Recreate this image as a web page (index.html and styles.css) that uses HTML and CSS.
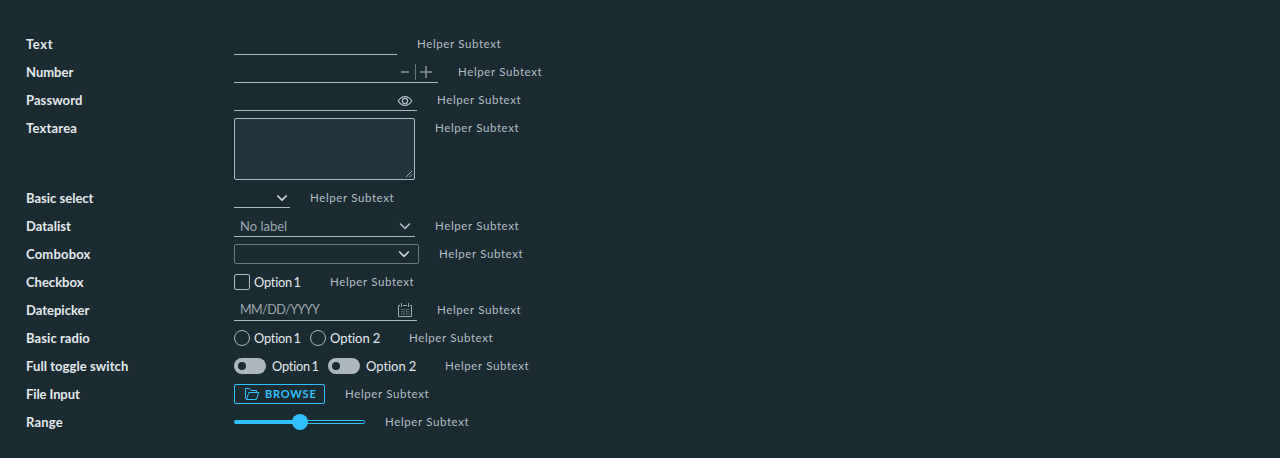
FILE: index.html
```html
<!DOCTYPE html>
<html lang="en">
<head>
<meta charset="utf-8">
<title>Form controls</title>
<link rel="stylesheet" href="styles.css">
</head>
<body>
<form class="form">
  <div class="row"><label class="label spaced-wide">Text</label><div class="control line text"></div><span class="helper">Helper Subtext</span></div>
  <div class="row"><label class="label">Number</label><div class="control line number">
    <svg width="42" height="20" viewBox="0 0 42 20" fill="none"><path d="M5 10H13" stroke="#84939a" stroke-width="1.6"/><path d="M19.5 2V18" stroke="#65747b"/><path d="M24 10H36M30 4V16" stroke="#84939a" stroke-width="1.6"/></svg>
  </div><span class="helper">Helper Subtext</span></div>
  <div class="row"><label class="label spaced">Password</label><div class="control line password">
    <svg width="16" height="16" viewBox="0 0 16 16" fill="none" stroke="#adbbc4" stroke-width="1.2"><path d="M1.2 8C3 5 5.3 3.6 8 3.6S13 5 14.8 8C13 11 10.7 12.4 8 12.4S3 11 1.2 8Z"/><circle cx="8" cy="8" r="2.6"/></svg>
  </div><span class="helper">Helper Subtext</span></div>
  <div class="row tall"><label class="label spaced-more">Textarea</label><div class="control area">
    <svg width="8" height="8" viewBox="0 0 8 8" fill="none" stroke="#adbbc4" stroke-width=".9"><path d="M1 7L7 1M4.5 7L7 4.5"/></svg>
  </div><span class="helper">Helper Subtext</span></div>
  <div class="row"><label class="label">Basic select</label><div class="control line select">
    <svg class="caret" width="12" height="8" viewBox="0 0 12 8"><path d="M1.3 1.5L6 6.2L10.7 1.5"/></svg>
  </div><span class="helper">Helper Subtext</span></div>
  <div class="row"><label class="label">Datalist</label><div class="control line datalist"><span class="placeholder">No label</span>
    <svg class="caret muted" width="12" height="8" viewBox="0 0 12 8"><path d="M1 1.5L6 6.4L11 1.5"/></svg>
  </div><span class="helper">Helper Subtext</span></div>
  <div class="row"><label class="label spaced-more">Combobox</label><div class="control combobox">
    <svg class="caret" width="12" height="8" viewBox="0 0 12 8"><path d="M1.1 1.5L6 6.4L10.9 1.5"/></svg>
  </div><span class="helper">Helper Subtext</span></div>
  <div class="row"><label class="label">Checkbox</label><div class="control check"><span class="box"></span><span class="option one">Option 1</span></div><span class="helper">Helper Subtext</span></div>
  <div class="row"><label class="label">Datepicker</label><div class="control line date"><span class="placeholder mask">MM/DD/YYYY</span>
    <svg width="16" height="16" viewBox="0 0 16 16" fill="none" stroke="#9dabb3"><path d="M3 3.5H1.5V14.5H14.5V3.5H13M6 3.5H10M4.5 1V5M11.5 1V5"/><path d="M4 7.5H12.5M4 9.8H12.5M4 12H12.5" stroke="#7f8e96" stroke-dasharray="1.5 1"/></svg>
  </div><span class="helper">Helper Subtext</span></div>
  <div class="row"><label class="label spaced">Basic radio</label><div class="control radios"><span class="radio"></span><span class="option one">Option 1</span><span class="radio"></span><span class="option two">Option 2</span></div><span class="helper">Helper Subtext</span></div>
  <div class="row"><label class="label spaced">Full toggle switch</label><div class="control toggles"><span class="toggle"></span><span class="option one">Option 1</span><span class="toggle"></span><span class="option two">Option 2</span></div><span class="helper">Helper Subtext</span></div>
  <div class="row"><label class="label tight">File Input</label><button class="control browse" type="button">
    <svg width="16" height="14" viewBox="0 0 16 14" fill="none" stroke="#2fc0ff"><path d="M3 12.5L1.5 11V1.5H5.5L7 3.5H12.5V5.5M2.5 12.5L4.8 5.5H14.8L12.3 12.5Z"/></svg><span>BROWSE</span></button><span class="helper">Helper Subtext</span></div>
  <div class="row"><label class="label spaced-more">Range</label><div class="control range"><span class="filled"></span><span class="thumb"></span><span class="rest"></span></div><span class="helper">Helper Subtext</span></div>
</form>
</body>
</html>
```
FILE: styles.css
```css
* { box-sizing: border-box; }
body { margin: 0; background: #1b2b32; color: #e3eaed; font-family: Lato, "Open Sans", sans-serif; font-variant-ligatures: none; }
.form { display: flex; flex-direction: column; gap: 8px; padding: 34px 26px 0; height: 458px; }
.row { display: flex; height: 20px; flex: none; align-items: flex-start; }
.tall { height: 62px; }
.label { width: 208px; flex: none; font-size: 13px; font-weight: 700; line-height: 20px; white-space: nowrap; }
.spaced { letter-spacing: .08px; }
.spaced-more { letter-spacing: .2px; }
.spaced-wide { letter-spacing: .6px; }
.tight { letter-spacing: -.1px; }
.helper { margin-left: 20px; font-size: 11.5px; line-height: 20px; letter-spacing: .62px; color: #b3bec4; white-space: nowrap; }
.control { flex: none; display: flex; align-items: center; height: 20px; }
.line { height: 21px; border-bottom: 1px solid #adbbc4; justify-content: flex-end; }
.text { width: 163px; }
.number { width: 204px; }
.password { width: 183px; padding: 1px 4px 0 0; }
.area { width: 181px; height: 62px; border: 1px solid #adbbc4; border-radius: 2px; background: #22343c; align-items: flex-end; justify-content: flex-end; padding: 1px; }
.select { width: 56px; height: 20px; padding-right: 2px; }
.caret { fill: none; stroke: #cbd4d8; stroke-width: 1.7; }
.muted { stroke: #adbbc4; stroke-width: 1.5; }
.datalist { width: 181px; padding: 0 4px 0 6px; justify-content: space-between; }
.placeholder { font-size: 13px; line-height: 20px; color: #9ba8af; }
.mask { font-size: 12.5px; letter-spacing: -.55px; }
.combobox { width: 185px; border: 1px solid #6b7a82; border-radius: 2px; justify-content: flex-end; padding-right: 8px; }
.date { width: 183px; padding: 0 4px 0 6px; justify-content: space-between; }
.check { width: 76px; }
.box, .radio { width: 16px; height: 16px; border: 1px solid #adbbc4; border-radius: 2px; flex: none; }
.radio { border-radius: 50%; }
.option { margin-left: 4px; font-size: 13px; line-height: 20px; white-space: nowrap; letter-spacing: -.05px; }
.one { width: 56px; font-size: 12.8px; word-spacing: -1.6px; letter-spacing: -.2px; }
.radios { width: 155px; }
.toggles { width: 191px; }
.toggle { width: 32px; height: 16px; border-radius: 8px; background: #adb7bc; padding: 4px; flex: none; }
.toggle::before { content: ""; display: block; width: 8px; height: 8px; border-radius: 50%; background: #1b2b32; }
.toggles .option { margin-left: 6px; }
.browse { width: 91px; margin: 0; padding: 0 0 0 9px; gap: 5px; border: 1px solid #2fc0ff; border-radius: 2px; background: none; color: #2fc0ff; font: 700 11px/18px Lato, sans-serif; letter-spacing: .8px; }
.range { width: 131px; }
.filled { width: 59px; height: 4px; background: #2fc0ff; border-radius: 2px 0 0 2px; }
.thumb { width: 16px; height: 16px; margin: 0 -1px; border-radius: 50%; background: #2fc0ff; }
.rest { flex: 1; height: 4px; border: 1px solid #2fc0ff; border-left: 0; border-radius: 0 2px 2px 0; }
```
